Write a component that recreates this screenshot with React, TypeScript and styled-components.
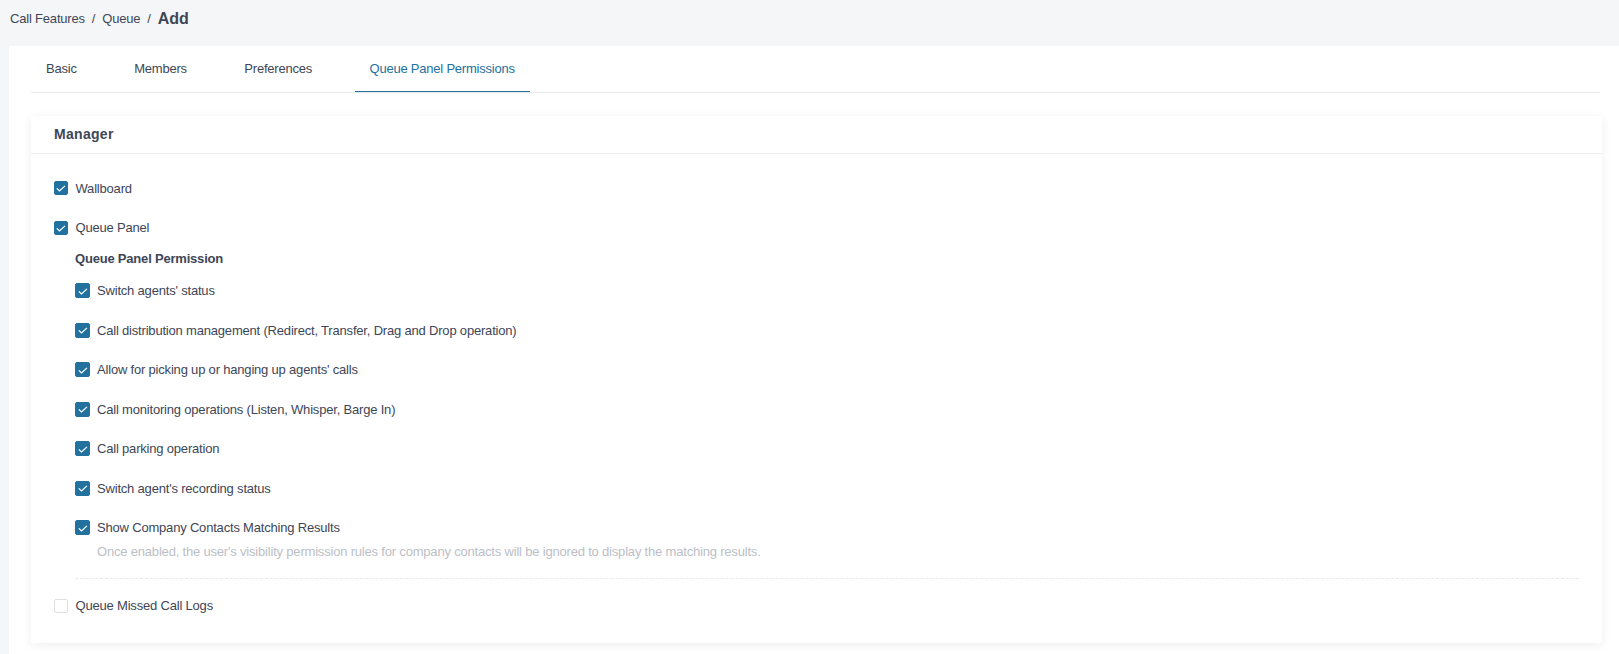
import styled, { createGlobalStyle } from "styled-components";

const GlobalStyle = createGlobalStyle`
  html, body {
    margin: 0;
    padding: 0;
    height: 100%;
    background: #f5f6f8;
    font-family: "Liberation Sans", Arial, sans-serif;
    color: #3e4656;
  }
`;

const tabs = ["Basic", "Members", "Preferences", "Queue Panel Permissions"];

const permissions = [
  "Switch agents' status",
  "Call distribution management (Redirect, Transfer, Drag and Drop operation)",
  "Allow for picking up or hanging up agents' calls",
  "Call monitoring operations (Listen, Whisper, Barge In)",
  "Call parking operation",
  "Switch agent's recording status",
];

const Check = ({ checked, size = 14 }: { checked: boolean; size?: number }) => (
  <StyledCheck $checked={checked} $size={size}>
    {checked && (
      <svg width="12" height="12" viewBox="0 0 12 12" fill="none">
        <path d="M1.8 6.4 L4.5 9 L10 3.9" stroke="#fff" strokeWidth="1.25" />
      </svg>
    )}
  </StyledCheck>
);

export default function App() {
  return (
    <StyledPage>
      <GlobalStyle />
      <StyledBreadcrumb>
        <span>Call Features</span>
        <StyledSlash>/</StyledSlash>
        <span>Queue</span>
        <StyledSlash>/</StyledSlash>
        <StyledCurrent>Add</StyledCurrent>
      </StyledBreadcrumb>

      <StyledSheet>
        <StyledTabs>
          {tabs.map((tab, i) => (
            <StyledTab key={tab} $active={i === tabs.length - 1}>
              {tab}
            </StyledTab>
          ))}
        </StyledTabs>

        <StyledCard>
          <StyledCardHeader>Manager</StyledCardHeader>
          <StyledCardBody>
            <StyledRow>
              <Check checked />
              Wallboard
            </StyledRow>
            <StyledRow>
              <Check checked />
              Queue Panel
            </StyledRow>

            <StyledNested>
              <StyledSubTitle>Queue Panel Permission</StyledSubTitle>
              {permissions.map((label) => (
                <StyledNestedRow key={label}>
                  <Check checked size={15} />
                  {label}
                </StyledNestedRow>
              ))}
              <StyledNestedRow>
                <Check checked size={15} />
                Show Company Contacts Matching Results
              </StyledNestedRow>
              <StyledHint>
                Once enabled, the user's visibility permission rules for company
                contacts will be ignored to display the matching results.
              </StyledHint>
            </StyledNested>

            <StyledRow>
              <Check checked={false} />
              Queue Missed Call Logs
            </StyledRow>
          </StyledCardBody>
        </StyledCard>
      </StyledSheet>
    </StyledPage>
  );
}

const StyledPage = styled.div`
  height: 654px;
  overflow: hidden;
  display: flex;
  flex-direction: column;
`;

const StyledBreadcrumb = styled.div`
  height: 46px;
  flex: none;
  display: flex;
  align-items: center;
  padding: 0 0 9px 10px;
  box-sizing: border-box;
  font-size: 13px;
  letter-spacing: -0.19px;
  color: #3e4656;
`;

const StyledSlash = styled.span`
  margin: 0 7px;
`;

const StyledCurrent = styled.span`
  font-size: 16px;
  font-weight: 700;
  letter-spacing: 0;
`;

const StyledSheet = styled.div`
  flex: 1;
  margin-left: 9px;
  padding: 0 17px 0 22px;
  background: #fff;
`;

const StyledTabs = styled.div`
  display: flex;
  gap: 27.5px;
  height: 47px;
  margin-right: 2px;
  box-sizing: border-box;
  border-bottom: 1px solid #e8e9ec;
`;

const StyledTab = styled.div<{ $active: boolean }>`
  height: 46px;
  padding: 0 15px;
  box-sizing: border-box;
  line-height: 46px;
  font-size: 13px;
  letter-spacing: -0.22px;
  color: ${(props) => (props.$active ? "#22719f" : "#3e4656")};
  border-bottom: 1px solid ${(props) => (props.$active ? "#22719f" : "transparent")};
`;

const StyledCard = styled.div`
  margin-top: 23px;
  height: 527px;
  background: #fff;
  border-radius: 2px;
  box-shadow: 0 2px 10px rgba(30, 40, 60, 0.08);
`;

const StyledCardHeader = styled.div`
  height: 38px;
  box-sizing: border-box;
  padding-left: 23px;
  line-height: 36px;
  font-size: 14px;
  font-weight: 700;
  letter-spacing: 0.3px;
  border-bottom: 1px solid #eceef0;
`;

const StyledCardBody = styled.div`
  padding: 24px 23px 0;
`;

const StyledRow = styled.label`
  display: flex;
  align-items: center;
  gap: 7.5px;
  height: 20px;
  margin-bottom: 19.6px;
  font-size: 13px;
  letter-spacing: -0.19px;
  color: #3e4656;
`;

const StyledNestedRow = styled(StyledRow)`
  gap: 7px;
  margin-bottom: 19.5px;
`;

const StyledCheck = styled.span<{ $checked: boolean; $size: number }>`
  flex: none;
  width: ${(props) => props.$size}px;
  height: ${(props) => props.$size}px;
  display: grid;
  place-items: center;
  box-sizing: border-box;
  border-radius: 2px;
  border: 1px solid ${(props) => (props.$checked ? "#22719f" : "#dcdfe3")};
  background: ${(props) => (props.$checked ? "#22719f" : "#fff")};
`;

const StyledNested = styled.div`
  margin: -9.6px 0 17px 21px;
  padding-bottom: 15.5px;
  border-bottom: 1px dashed #e8e9ec;
`;

const StyledSubTitle = styled.div`
  height: 20px;
  line-height: 22px;
  margin-bottom: 13px;
  font-size: 13px;
  font-weight: 700;
  letter-spacing: -0.2px;
`;

const StyledHint = styled.div`
  margin-top: -15px;
  padding-left: 22px;
  line-height: 20px;
  font-size: 13px;
  letter-spacing: -0.19px;
  color: #bcc0c6;
`;
